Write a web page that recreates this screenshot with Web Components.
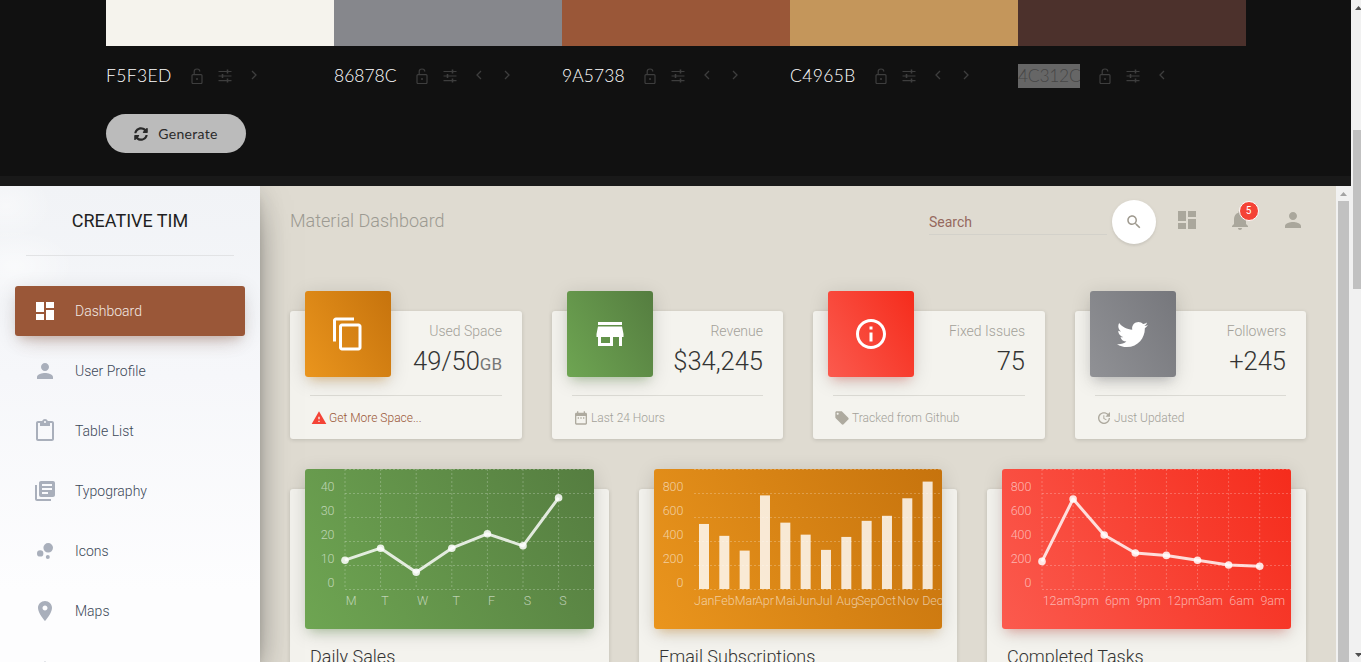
<!DOCTYPE html>
<html lang="en">
<head>
<meta charset="utf-8">
<title>Material Dashboard</title>
<style>
html,body{margin:0;padding:0;height:662px;overflow:hidden;background:#111;font-family:Roboto,"Liberation Sans",sans-serif}
</style>
</head>
<body>
<app-shell></app-shell>
<script>
const P={
dashboard:'M3 13h8V3H3v10zm0 8h8v-6H3v6zm10 0h8V11h-8v10zm0-18v6h8V3h-8z',
person:'M12 12c2.21 0 4-1.79 4-4s-1.79-4-4-4-4 1.79-4 4 1.79 4 4 4zm0 2c-2.67 0-8 1.34-8 4v2h16v-2c0-2.66-5.33-4-8-4z',
paste:'M19 2h-4.18C14.4.84 13.3 0 12 0c-1.3 0-2.4.84-2.82 2H5c-1.1 0-2 .9-2 2v16c0 1.1.9 2 2 2h14c1.1 0 2-.9 2-2V4c0-1.1-.9-2-2-2zm-7 0c.55 0 1 .45 1 1s-.45 1-1 1-1-.45-1-1 .45-1 1-1zm7 18H5V4h2v3h10V4h2v16z',
books:'M4 6H2v14c0 1.1.9 2 2 2h14v-2H4V6zm16-4H8c-1.1 0-2 .9-2 2v12c0 1.1.9 2 2 2h12c1.1 0 2-.9 2-2V4c0-1.1-.9-2-2-2zm-1 9H9V9h10v2zm-4 4H9v-2h6v2zm4-8H9V5h10v2z',
bubble:'M7.2 11.2a3.2 3.2 0 1 0 0 6.4 3.2 3.2 0 1 0 0-6.4zM14.8 16a2 2 0 1 0 0 4 2 2 0 1 0 0-4zM15.2 4a4.8 4.8 0 1 0 0 9.6 4.8 4.8 0 1 0 0-9.6z',
place:'M12 2C8.13 2 5 5.13 5 9c0 5.25 7 13 7 13s7-7.75 7-13c0-3.87-3.13-7-7-7zm0 9.5c-1.38 0-2.5-1.12-2.5-2.5s1.12-2.5 2.5-2.5 2.5 1.12 2.5 2.5-1.12 2.5-2.5 2.5z',
bell:'M12 22c1.1 0 2-.9 2-2h-4c0 1.1.89 2 2 2zm6-6v-5c0-3.07-1.64-5.64-4.5-6.32V4c0-.83-.67-1.5-1.5-1.5s-1.5.67-1.5 1.5v.68C7.63 5.36 6 7.92 6 11v5l-2 2v1h16v-1l-2-2z',
search:'M15.5 14h-.79l-.28-.27C15.41 12.59 16 11.11 16 9.5 16 5.91 13.09 3 9.5 3S3 5.91 3 9.5 5.91 16 9.5 16c1.61 0 3.09-.59 4.23-1.57l.27.28v.79l5 4.99L20.49 19l-4.99-5zm-6 0C7.01 14 5 11.99 5 9.5S7.01 5 9.5 5 14 7.01 14 9.5 11.99 14 9.5 14z',
copy:'M16 1H4c-1.1 0-2 .9-2 2v14h2V3h12V1zm3 4H8c-1.1 0-2 .9-2 2v14c0 1.1.9 2 2 2h11c1.1 0 2-.9 2-2V7c0-1.1-.9-2-2-2zm0 16H8V7h11v14z',
store:'M20 4H4v2h16V4zm1 10v-2l-1-5H4l-1 5v2h1v6h10v-6h4v6h2v-6h1zm-9 4H6v-4h6v4z',
info:'M11 17h2v-6h-2v6zm1-15C6.48 2 2 6.48 2 12s4.48 10 10 10 10-4.48 10-10S17.52 2 12 2zm0 18c-4.41 0-8-3.59-8-8s3.59-8 8-8 8 3.59 8 8-3.59 8-8 8zM11 9h2V7h-2v2z',
warning:'M1 21h22L12 2 1 21zm12-3h-2v-2h2v2zm0-4h-2v-4h2v4z',
date:'M9 11H7v2h2v-2zm4 0h-2v2h2v-2zm4 0h-2v2h2v-2zm2-7h-1V2h-2v2H8V2H6v2H5c-1.11 0-1.99.9-1.99 2L3 20c0 1.1.89 2 2 2h14c1.1 0 2-.9 2-2V6c0-1.1-.9-2-2-2zm0 16H5V9h14v11z',
tag:'M21.41 11.58l-9-9C12.05 2.22 11.55 2 11 2H4c-1.1 0-2 .9-2 2v7c0 .55.22 1.05.59 1.42l9 9c.36.36.86.58 1.41.58.55 0 1.05-.22 1.41-.59l7-7c.37-.36.59-.86.59-1.41 0-.55-.23-1.06-.59-1.42zM5.5 7C4.67 7 4 6.33 4 5.5S4.67 4 5.5 4 7 4.67 7 5.5 6.33 7 5.5 7z',
update:'M21 10.12h-6.78l2.74-2.82c-2.73-2.7-7.15-2.8-9.88-.1-2.73 2.71-2.73 7.08 0 9.79s7.15 2.71 9.88 0C18.32 15.65 19 14.08 19 12.1h2c0 1.98-.88 4.55-2.64 6.29-3.51 3.48-9.21 3.48-12.72 0-3.5-3.47-3.53-9.11-.02-12.58s9.14-3.47 12.65 0L21 3v7.12zM12.5 8v4.25l3.5 2.08-.72 1.21L11 13V8h1.5z'
};
const TW='M459.37 151.716c.325 4.548.325 9.097.325 13.645 0 138.72-105.583 298.558-298.558 298.558-59.452 0-114.68-17.219-161.137-47.106 8.447.974 16.568 1.299 25.34 1.299 49.055 0 94.213-16.568 130.274-44.832-46.132-.975-84.792-31.188-98.112-72.772 6.498.974 12.995 1.624 19.818 1.624 9.421 0 18.843-1.3 27.614-3.573-48.081-9.747-84.143-51.98-84.143-102.985v-1.299c13.969 7.797 30.214 12.67 47.431 13.319-28.264-18.843-46.781-51.005-46.781-87.391 0-19.492 5.197-37.36 14.294-52.954 51.655 63.675 129.3 105.258 216.365 109.807-1.624-7.797-2.599-15.918-2.599-24.04 0-57.828 46.782-104.934 104.934-104.934 30.213 0 57.502 12.67 76.67 33.137 23.715-4.548 46.456-13.32 66.599-25.34-7.798 24.366-24.366 44.833-46.132 57.827 21.117-2.273 41.584-8.122 60.426-16.243-14.292 20.791-32.161 39.308-52.628 54.253z';
const SYNC='M370.72 133.28C339.458 104.008 298.888 87.962 255.848 88c-77.458.068-144.328 53.178-162.791 126.85-1.344 5.363-6.122 9.15-11.651 9.15H24.103c-7.498 0-13.194-6.807-11.807-14.176C33.933 94.924 134.813 8 256 8c66.448 0 126.791 26.136 171.315 68.685L463.03 40.97C478.149 25.851 504 36.559 504 57.941V192c0 13.255-10.745 24-24 24H345.941c-21.382 0-32.09-25.851-16.971-40.971l41.75-41.749zM32 296h134.059c21.382 0 32.09 25.851 16.971 40.971l-41.75 41.75c31.262 29.273 71.835 45.319 114.876 45.28 77.418-.07 144.315-53.144 162.787-126.849 1.344-5.363 6.122-9.15 11.651-9.15h57.304c7.498 0 13.194 6.807 11.807 14.176C478.067 417.076 377.187 504 256 504c-66.448 0-126.791-26.136-171.315-68.685L48.97 471.03C33.851 486.149 8 475.441 8 454.059V320c0-13.255 10.745-24 24-24z';

class Base extends HTMLElement{
  connectedCallback(){
    if(this.shadowRoot)return;
    this.attachShadow({mode:'open'}).innerHTML=this.render();
  }
  a(n,d=''){const v=this.getAttribute(n);return v===null?d:v}
}

customElements.define('m-icon',class extends Base{
  render(){
    const s=this.a('size','24'),n=this.a('name');
    const inner=n==='twitter'?`<svg viewBox="0 0 512 512" width="${s}" height="${s}"><path d="${TW}"/></svg>`
      :n==='sync'?`<svg viewBox="0 0 512 512" width="${s}" height="${s}"><path d="${SYNC}"/></svg>`
      :`<svg viewBox="0 0 24 24" width="${s}" height="${s}"><path d="${P[n]}"/></svg>`;
    return `<style>:host{display:inline-flex;flex:none;line-height:0}svg{fill:currentColor;display:block}</style>${inner}`;
  }
});

customElements.define('hex-tool',class extends Base{
  render(){
    const k=this.a('kind');
    const g={
      lock:'<rect x="3" y="6.6" width="10" height="9" rx="1" fill="none" stroke-width="1.2"/><path d="M5.2 6.4V3.6a2.8 2.6 0 0 1 5.6 0" fill="none" stroke-width="1.2"/><circle cx="8" cy="11" r="1" fill="#3e3e3e" stroke="none"/>',
      tune:'<path d="M1.5 3.5h13M1.5 8h13M1.5 12.6h13" fill="none" stroke-width="1.2"/><path d="M10.5 1.4v4M5.5 6v4M10.5 10.6v4" fill="none" stroke-width="1.6"/>',
      left:'<path d="M10 4l-4 4 4 4" fill="none" stroke-width="1.3"/>',
      right:'<path d="M6 4l4 4-4 4" fill="none" stroke-width="1.3"/>'
    }[k];
    const top=k==='left'||k==='right'?'-2px':'0';
    return `<style>:host{display:flex;width:28.5px;height:24px;align-items:center;justify-content:center;flex:none}svg{stroke:#3e3e3e;display:block;margin-top:${top}}</style><svg viewBox="0 0 16 16" width="16" height="16">${g}</svg>`;
  }
});

customElements.define('palette-swatch',class extends Base{
  render(){
    const c=this.a('color'),sel=this.hasAttribute('selected');
    const tools=['lock','tune'];
    if(this.hasAttribute('prev'))tools.push('left');
    if(this.hasAttribute('next'))tools.push('right');
    return `<style>
      :host{display:block;width:228px;flex:none}
      .c{height:46px;background:#${c}}
      .r{display:flex;align-items:center;height:24px;margin-top:18px}
      .h{font:300 17.5px/24px Lato,"Open Sans",sans-serif;color:#fff;width:${this.a('tw')}px;letter-spacing:${this.a('ls','0')}px;white-space:nowrap;overflow:hidden;flex:none}
      .h.s{background:#666;color:#464646}
      .t{display:flex;margin-left:10.5px}
    </style><div class="c"></div><div class="r"><span class="h ${sel?'s':''}">${c}</span><div class="t">${tools.map(t=>`<hex-tool kind="${t}"></hex-tool>`).join('')}</div></div>`;
  }
});

customElements.define('generate-button',class extends Base{
  render(){
    return `<style>
      :host{display:inline-flex;align-items:center;justify-content:center;gap:10px;width:140px;height:39px;border-radius:20px;background:#bbb;color:#2a2a2a;font:400 14px Lato,"Open Sans",sans-serif;letter-spacing:.3px}
    </style><m-icon name="sync" size="14"></m-icon><slot></slot>`;
  }
});

customElements.define('palette-generator',class extends Base{
  render(){
    return `<style>
      :host{display:block;height:186px;box-sizing:border-box;background:#111;border-bottom:10px solid #191919}
      .row{display:flex;padding-left:106px}
      .g{padding:26px 0 0 106px}
    </style>
    <div class="row">
      <palette-swatch color="F5F3ED" tw="66" ls=".35" next></palette-swatch>
      <palette-swatch color="86878C" tw="63" prev next></palette-swatch>
      <palette-swatch color="9A5738" tw="63" ls=".1" prev next></palette-swatch>
      <palette-swatch color="C4965B" tw="66" ls=".35" prev next></palette-swatch>
      <palette-swatch color="4C312C" tw="62" ls="-.3" prev selected></palette-swatch>
    </div>
    <div class="g"><generate-button>Generate</generate-button></div>`;
  }
});

customElements.define('nav-item',class extends Base{
  render(){
    return `<style>
      :host{display:flex;align-items:center;gap:18px;height:50px;margin:0 15px 10px;padding-left:18px;border-radius:3px;color:#3c4858;font:300 14px Roboto,sans-serif}
      :host([active]){background:#9a5738;color:#f3e9e3;box-shadow:0 12px 20px -10px rgba(154,87,56,.28),0 4px 20px 0 rgba(0,0,0,.12),0 7px 8px -5px rgba(154,87,56,.2)}
      m-icon{color:#a9afbb}
      :host([active]) m-icon{color:#fff}
    </style><m-icon name="${this.a('icon')}"></m-icon><slot></slot>`;
  }
});

customElements.define('side-bar',class extends Base{
  render(){
    return `<style>
      :host{display:block;width:260px;flex:none;height:476px;overflow:hidden;position:relative;z-index:2;
        background:
          radial-gradient(ellipse 46px 34px at 6px 20px,rgba(255,255,255,.45),transparent),
          radial-gradient(ellipse 60px 36px at 14px 80px,rgba(255,255,255,.55),transparent),
          linear-gradient(#f1f3f6,#f6f7fa 40%,#fdfdfe 85%);
        box-shadow:0 16px 38px -12px rgba(0,0,0,.56),0 4px 25px 0 rgba(0,0,0,.12),0 8px 10px -5px rgba(0,0,0,.2)}
      .b{height:70px;margin:0 26px;box-sizing:border-box;border-bottom:1px solid #e2e3e5;display:flex;justify-content:center;padding-top:24px;font:400 18px/22px Roboto,sans-serif;color:#1f1f22}
      .n{padding-top:30px}
    </style>
    <div class="b">CREATIVE TIM</div>
    <div class="n">
      <nav-item icon="dashboard" active>Dashboard</nav-item>
      <nav-item icon="person">User Profile</nav-item>
      <nav-item icon="paste">Table List</nav-item>
      <nav-item icon="books">Typography</nav-item>
      <nav-item icon="bubble">Icons</nav-item>
      <nav-item icon="place">Maps</nav-item>
      <nav-item icon="bell"></nav-item>
    </div>`;
  }
});

customElements.define('top-nav',class extends Base{
  render(){
    return `<style>
      :host{display:flex;align-items:center;height:44px;margin-top:14px;padding:0 16.5px 0 30px}
      .t{flex:1;font:300 18px/22px Roboto,sans-serif;color:#9c9a92;margin-bottom:2px}
      .s{width:178px;height:25px;box-sizing:border-box;border-bottom:1px solid #d3d1ca;font:400 14px/24px Roboto,sans-serif;color:#96695e;margin-left:-1px}
      .c{width:44px;height:44px;border-radius:50%;background:#fff;margin-left:5px;display:flex;align-items:center;justify-content:center;color:#9f9a8f;box-shadow:0 2px 2px 0 rgba(0,0,0,.05),0 1px 5px rgba(0,0,0,.05)}
      .i{width:53px;display:flex;justify-content:center;margin-bottom:4px;color:#aaa79c;position:relative}
      .k{position:absolute;left:25px;top:-7px;width:20px;height:20px;box-sizing:border-box;border:1px solid #fff;border-radius:50%;background:#f44336;color:#fff;font:400 10px/18px Roboto,sans-serif;text-align:center}
    </style>
    <div class="t">Material Dashboard</div>
    <div class="s">Search</div>
    <div class="c"><m-icon name="search" size="18"></m-icon></div>
    <div class="i" style="margin-left:4.5px"><m-icon name="dashboard"></m-icon></div>
    <div class="i"><m-icon name="bell"></m-icon><span class="k">5</span></div>
    <div class="i"><m-icon name="person"></m-icon></div>`;
  }
});

const GR={orange:['#ea951d','#c6730d','rgba(234,149,29,.4)'],green:['#6ea552','#557d40','rgba(110,165,82,.4)'],red:['#fb5a4e','#f52c1c','rgba(251,90,78,.4)'],grey:['#909195','#76777c','rgba(134,135,140,.4)']};

customElements.define('stat-card',class extends Base{
  render(){
    const g=GR[this.a('tone')];
    return `<style>
      :host{display:block;height:128px;box-sizing:border-box;background:#f4f3ee;border-radius:3px;box-shadow:0 1px 4px 0 rgba(0,0,0,.14)}
      .h{display:flex;height:84px;padding:0 20px 0 15px;box-sizing:border-box}
      .b{width:86px;height:86px;margin-top:-20px;flex:none;border-radius:3px;background:linear-gradient(60deg,${g[0]},${g[1]});color:#fff;display:flex;align-items:center;justify-content:center;box-shadow:0 4px 20px 0 rgba(0,0,0,.14),0 7px 10px -5px ${g[2]}}
      .x{flex:1;text-align:right;padding-top:10px}
      .l{font:300 14px/20px Roboto,sans-serif;color:#a3a199}
      .v{font:300 25.5px/34px Roboto,sans-serif;color:#333;margin-top:3px}
      ::slotted(small){font-size:17px;color:#777;font-weight:400}
      .f{margin:0 20px;border-top:1px solid #dbdad4;padding-top:11px;display:flex;align-items:center;gap:2px;font:300 12px/22px Roboto,sans-serif;color:${this.hasAttribute('alert')?'#9a5738':'#a3a199'}}
      .f m-icon{color:${this.hasAttribute('alert')?'#f44336':'#aeaa9f'};margin-left:1px}
    </style>
    <div class="h"><div class="b"><slot name="icon"></slot></div><div class="x"><div class="l">${this.a('label')}</div><div class="v"><slot></slot></div></div></div>
    <div class="f"><m-icon name="${this.a('ficon')}" size="16"></m-icon><span>${this.a('foot')}</span></div>`;
  }
});

customElements.define('chart-plot',class extends Base{
  render(){
    const t=this.a('type'),xs=this.a('x').split(','),ys=this.a('y').split(',').map(Number),high=+this.a('high'),
      labels=this.a('ylabels').split(','),sw=+this.a('step');
    const G='rgba(255,255,255,.24)',L='rgba(255,255,255,.58)';
    let s='';
    [0,24,48,72,96,120].forEach(y=>{s+=`<line x1="40" x2="289" y1="${y+.5}" y2="${y+.5}" stroke="${G}" stroke-dasharray="2 2"/>`});
    if(t==='line')xs.forEach((_,i)=>{const x=40+i*sw;s+=`<line x1="${x}" x2="${x}" y1="0" y2="120" stroke="${G}" stroke-dasharray="2 2"/>`});
    labels.forEach((l,i)=>{s+=`<text x="29.5" y="${22+i*24}" text-anchor="end">${l}</text>`});
    xs.forEach((l,i)=>{s+=`<text x="${40+i*sw+(t==='bar'?(i===11?4.5:0):.7)}" y="136">${l}</text>`});
    const yy=v=>120-v*120/high;
    if(t==='line'){
      s+=`<polyline fill="none" stroke="rgba(255,255,255,.82)" stroke-width="3" stroke-linejoin="round" points="${ys.map((v,i)=>(40+i*sw)+','+yy(v)).join(' ')}"/>`;
      ys.forEach((v,i)=>{s+=`<circle cx="${40+i*sw}" cy="${yy(v)}" r="3.8" fill="rgba(255,255,255,.85)"/>`});
    }else{
      ys.forEach((v,i)=>{const x=50+i*sw;s+=`<rect x="${x-5}" y="${yy(v)}" width="10" height="${120-yy(v)}" fill="rgba(255,255,255,.82)"/>`});
    }
    return `<style>:host{display:block}svg{display:block}text{font:300 12.5px Roboto,sans-serif;fill:${L}}</style><svg width="289" height="160" viewBox="0 0 289 160">${s}</svg>`;
  }
});

customElements.define('chart-card',class extends Base{
  render(){
    const g=GR[this.a('tone')];
    return `<style>
      :host{display:block;background:#f4f3ee;border-radius:3px;box-shadow:0 1px 4px 0 rgba(0,0,0,.14);height:200px}
      .w{border-radius:3px;box-shadow:0 4px 20px 0 rgba(0,0,0,.14),0 7px 10px -5px ${g[2]};margin:-20px 15px 0}
      .h{height:160px;border-radius:3px;overflow:hidden;background:linear-gradient(60deg,${g[0]},${g[1]})}
      .t{padding:15px 20px 0;font:300 18px/25px Roboto,sans-serif;color:#333}
    </style><div class="w"><div class="h"><slot></slot></div></div><div class="t">${this.a('title')}</div>`;
  }
});

customElements.define('dash-main',class extends Base{
  render(){
    return `<style>
      :host{display:block;flex:1;min-width:0;height:476px;overflow:hidden;background:#dfdbd1}
      .s{display:grid;grid-template-columns:232px 231px 232px 231px;gap:30px;padding:0 30px;margin-top:67px}
      .c{display:grid;grid-template-columns:319px 318px 319px;gap:30px;padding:0 30px;margin-top:50px}
    </style>
    <top-nav></top-nav>
    <div class="s"><slot name="stats"></slot></div>
    <div class="c"><slot name="charts"></slot></div>`;
  }
});

customElements.define('fake-scrollbar',class extends Base{
  render(){
    const w=this.a('w');
    return `<style>:host{display:block;flex:none;background:#f1f1f1;width:${w}px;overflow:hidden;position:relative}</style><slot></slot>`;
  }
});

customElements.define('sb-thumb',class extends Base{
  render(){
    return `<style>:host{display:block;background:#c1c1c1;margin-left:${this.a('ml')}px;margin-right:${this.a('mr')}px;margin-top:${this.a('top')}px;height:${this.a('h')}px}</style>`;
  }
});

customElements.define('sb-arrow',class extends Base{
  render(){
    const d=this.a('dir');
    return `<style>:host{position:absolute;left:${this.a('x')}px;top:${this.a('y')}px;width:7px;height:4px;line-height:0}svg{display:block}</style><svg width="7" height="4" viewBox="0 0 7 4"><path d="${d==='up'?'M3.5 0L7 4H0z':'M0 0h7L3.5 4z'}" fill="${this.a('c','#a3a3a3')}"/></svg>`;
  }
});

customElements.define('dash-frame',class extends Base{
  render(){
    return `<style>:host{display:flex;height:476px;overflow:hidden}</style><slot></slot>`;
  }
});

customElements.define('app-shell',class extends Base{
  render(){
    return `<style>
      :host{display:flex;width:1361px;height:662px;overflow:hidden;background:#111}
      .l{width:1351px;flex:none}
    </style>
    <div class="l">
      <palette-generator></palette-generator>
      <dash-frame>
        <side-bar></side-bar>
        <dash-main>
          <stat-card slot="stats" tone="orange" label="Used Space" ficon="warning" foot="Get More Space..." alert><m-icon slot="icon" name="copy" size="36"></m-icon>49/50<small>GB</small></stat-card>
          <stat-card slot="stats" tone="green" label="Revenue" ficon="date" foot="Last 24 Hours"><m-icon slot="icon" name="store" size="36"></m-icon>$34,245</stat-card>
          <stat-card slot="stats" tone="red" label="Fixed Issues" ficon="tag" foot="Tracked from Github"><m-icon slot="icon" name="info" size="36"></m-icon>75</stat-card>
          <stat-card slot="stats" tone="grey" label="Followers" ficon="update" foot="Just Updated"><m-icon slot="icon" name="twitter" size="31" style="margin-right:1px"></m-icon>+245</stat-card>
          <chart-card slot="charts" tone="green" title="Daily Sales"><chart-plot type="line" step="35.6" high="50" x="M,T,W,T,F,S,S" y="12,17,7,17,23,18,38" ylabels="40,30,20,10,0"></chart-plot></chart-card>
          <chart-card slot="charts" tone="orange" title="Email Subscriptions"><chart-plot type="bar" step="20.33" high="1000" x="Jan,Feb,Mar,Apr,Mai,Jun,Jul,Aug,Sep,Oct,Nov,Dec" y="542,443,320,780,553,453,326,434,568,610,756,895" ylabels="800,600,400,200,0"></chart-plot></chart-card>
          <chart-card slot="charts" tone="red" title="Completed Tasks"><chart-plot type="line" step="31.1" high="1000" x="12am,3pm,6pm,9pm,12pm,3am,6am,9am" y="230,750,450,300,280,240,200,190" ylabels="800,600,400,200,0"></chart-plot></chart-card>
        </dash-main>
        <fake-scrollbar w="15"><sb-arrow dir="up" x="4" y="6"></sb-arrow><sb-thumb ml="2" mr="2" top="15" h="470"></sb-thumb></fake-scrollbar>
      </dash-frame>
    </div>
    <fake-scrollbar w="10"><sb-arrow dir="up" x="4" y="6" c="#505050"></sb-arrow><sb-thumb ml="2" mr="0" top="130" h="159"></sb-thumb><sb-arrow dir="down" x="4" y="653" c="#505050"></sb-arrow></fake-scrollbar>`;
  }
});
</script>
</body>
</html>
